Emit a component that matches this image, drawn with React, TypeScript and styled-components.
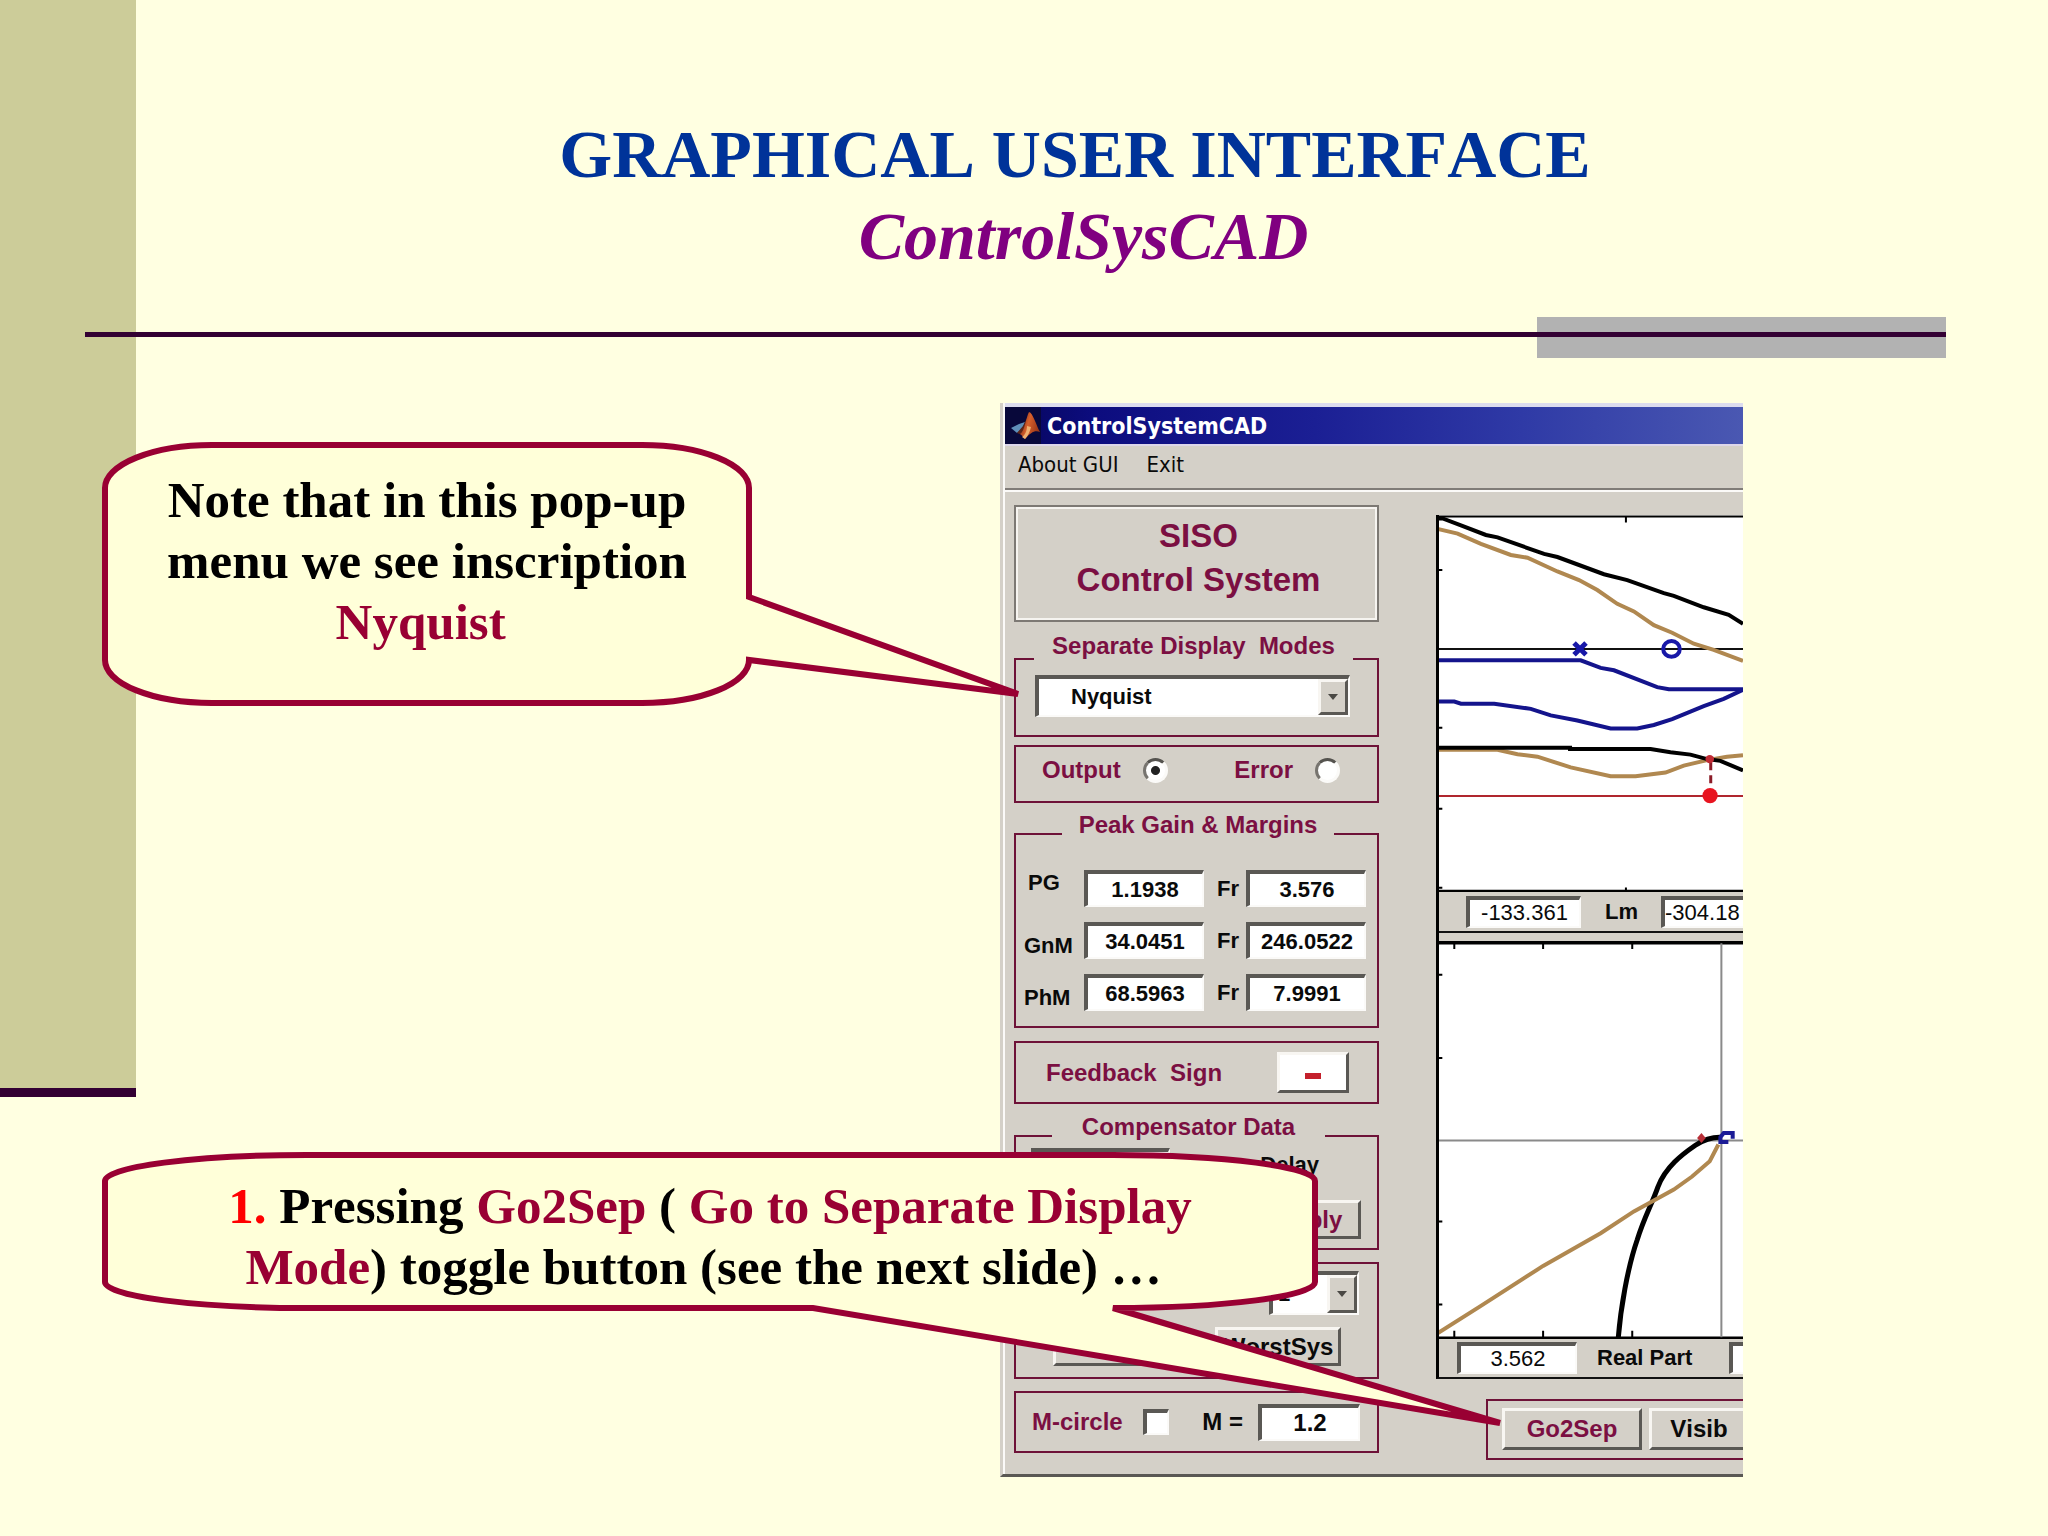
import React from "react";
import styled, { createGlobalStyle, css } from "styled-components";

const color = {
  paper: "#ffffe1",
  note: "#ffffd9",
  olive: "#cccc99",
  plum: "#330033",
  crimson: "#990033",
  face: "#d4d0c8",
  line: "#6e1238",
  label: "#7b0f42",
  shade: "#5a5854",
};

const Global = createGlobalStyle`
  *, *::before, *::after { box-sizing: border-box; }
  body { margin: 0; background: ${color.paper}; }
  button, input, select { font: inherit; color: inherit; margin: 0; border-radius: 0; }
`;

const Slide = styled.main`
  position: relative;
  display: grid;
  grid-template-columns: 136px minmax(0, 1fr);
  min-height: 100vh;
  overflow: hidden;
  background: ${color.paper};
  font-family: "Liberation Serif", "Times New Roman", serif;
  font-kerning: none;
`;

const Band = styled.div`
  height: 1097px;
  background: ${color.olive};
  border-bottom: 9px solid ${color.plum};
`;

const Main = styled.div`
  min-width: 0;
`;

const Heading = styled.h1`
  margin: 0;
  padding: 113px 102px 0 68px;
  text-align: center;
  font-size: 68px;
  line-height: 82px;
  font-weight: 700;
  color: #003399;
`;

const Product = styled.em`
  display: block;
  white-space: pre;
  color: #800080;
`;

const Rule = styled.div`
  position: relative;
  display: grid;
  margin: 40px 102px 0 -51px;
  & > * {
    grid-area: 1 / 1;
  }
`;

const RuleBlock = styled.div`
  justify-self: end;
  width: 22%;
  height: 41px;
  background: #b2b2b2;
`;

const RuleLine = styled.div`
  height: 5px;
  margin-top: 15px;
  background: ${color.plum};
`;

const Stage = styled.div`
  display: grid;
  grid-template-columns: 864fr 743fr 305fr;
  margin-top: 45px;
`;

/* ---------- application window ---------- */

const Window = styled.section`
  grid-column: 2;
  min-width: 0;
  overflow: hidden;
  background: ${color.face};
  border-left: 3px solid ${color.face};
  border-bottom: 3px solid ${color.shade};
  box-shadow: inset 2px 0 0 #fbfaf8;
  padding-left: 2px;
  font-family: "Liberation Sans", Arial, sans-serif;
  font-weight: 700;
  font-size: 22px;
  line-height: 26px;
  color: #0a0a0a;
`;

const TitleBar = styled.header`
  display: flex;
  align-items: center;
  gap: 6px;
  height: 41px;
  border-top: 4px solid #dcdcee;
  background: linear-gradient(90deg, #06065c 0%, #0c0c7e 12%, #1b1f94 42%, #2f3aa6 70%, #4a58b2 100%);
  color: #fff;
  font-family: "DejaVu Sans Condensed", "DejaVu Sans", sans-serif;
  font-size: 23px;
`;

const Menu = styled.nav`
  display: flex;
  align-items: center;
  gap: 28px;
  height: 46px;
  padding: 0 0 5px 13px;
  border-top: 2px solid #dcd6ea;
  border-bottom: 2px solid #807c78;
  box-shadow: 0 2px 0 #fbfaf8;
  font-family: "DejaVu Sans Condensed", "DejaVu Sans", sans-serif;
  font-size: 22px;
  font-weight: 400;
`;

const MenuItem = styled.button`
  border: 0;
  padding: 0;
  background: none;
`;

const Content = styled.div`
  display: grid;
  grid-template-columns: 365px minmax(0, 1fr);
  gap: 57px;
  padding: 15px 0 14px 9px;
`;

const Controls = styled.div`
  display: flex;
  flex-direction: column;
`;

const System = styled.h2`
  height: 117px;
  margin: 0 0 10px;
  padding: 7px 0 0 4px;
  border: 2px solid #7d7974;
  outline: 2px solid #f6f4f0;
  outline-offset: -4px;
  text-align: center;
  font-size: 33px;
  line-height: 44px;
  color: ${color.label};
`;

const Panel = styled.div<{ $h: number; $gap: number }>`
  display: flex;
  align-items: center;
  height: ${(p) => p.$h}px;
  margin-bottom: ${(p) => p.$gap}px;
  border: 2px solid ${color.line};
`;

const GroupHead = styled.div`
  display: flex;
  align-items: flex-end;
`;

const Stub = styled.span<{ $w: number; $drop: number; $end?: boolean }>`
  width: ${(p) => p.$w}px;
  height: ${(p) => p.$drop}px;
  border: 0 solid ${color.line};
  border-top-width: 2px;
  ${(p) => (p.$end ? "border-right-width: 2px;" : "border-left-width: 2px;")}
`;

const GroupTitle = styled.h3`
  flex: 1;
  margin: 0;
  text-align: center;
  white-space: pre;
  font-size: 24px;
  line-height: 28px;
  color: ${color.label};
`;

const GroupBody = styled.div<{ $h: number; $gap: number }>`
  height: ${(p) => p.$h}px;
  margin-bottom: ${(p) => p.$gap}px;
  border: 2px solid ${color.line};
  border-top: 0;
`;

const sunken = css`
  border: 2px solid #fbfaf8;
  border-top: 4px solid ${color.shade};
  border-left: 4px solid ${color.shade};
  background: #fff;
`;

const raised = css`
  border: 3px solid ${color.shade};
  border-top-color: #f8f6f2;
  border-left-color: #f8f6f2;
`;

const Field = styled.input<{ $w: number; $plain?: boolean; $left?: boolean }>`
  ${sunken}
  flex: none;
  width: ${(p) => p.$w}px;
  height: 37px;
  padding: 0;
  text-align: ${(p) => (p.$left ? "left" : "center")};
  font-weight: ${(p) => (p.$plain ? 400 : 700)};
`;

const StripField = styled(Field)`
  height: 32px;
`;

const Picker = styled.span<{ $w: number; $h: number }>`
  ${sunken}
  display: grid;
  grid-template-columns: minmax(0, 1fr) 30px;
  width: ${(p) => p.$w}px;
  height: ${(p) => p.$h}px;
`;

const PickerSelect = styled.select<{ $indent: number }>`
  grid-area: 1 / 1 / 2 / 3;
  appearance: none;
  border: 0;
  padding: 0 0 0 ${(p) => p.$indent}px;
  background: none;
`;

const PickerArrow = styled.span`
  ${raised}
  grid-area: 1 / 2;
  display: grid;
  place-items: center;
  background: ${color.face};
  pointer-events: none;
`;

const ModeRow = styled.div`
  display: flex;
  padding: 15px 0 0 19px;
`;

const Choice = styled.label`
  display: flex;
  align-items: center;
  gap: 22px;
  font-size: 24px;
  color: ${color.label};
`;

const Radio = styled.input`
  appearance: none;
  width: 25px;
  height: 25px;
  border: 3px solid #fbfaf8;
  border-top-color: #55534f;
  border-left-color: #77746f;
  border-radius: 50% !important;
  background: #fff;
  &:checked {
    background: radial-gradient(circle, #222 0 4px, #fff 5px);
  }
`;

const Check = styled.input`
  ${sunken}
  appearance: none;
  width: 26px;
  height: 26px;
`;

const Choices = styled(Panel)`
  padding: 0 37px 8px 26px;
  justify-content: space-between;
`;

const Margins = styled.div`
  display: grid;
  grid-template-columns: 60px 120px 42px 120px;
  row-gap: 15px;
  padding: 31px 0 0 8px;
`;

const MarginLabel = styled.label<{ $at?: "start" | "center" | "end"; $indent?: number }>`
  align-self: ${(p) => p.$at ?? "center"};
  padding-left: ${(p) => p.$indent ?? 0}px;
`;

const SignPanel = styled(Panel)`
  justify-content: space-between;
  padding: 0 28px 0 30px;
`;

const PanelText = styled.span<{ $accent?: boolean }>`
  white-space: pre;
  font-size: 24px;
  color: ${(p) => (p.$accent ? color.label : "inherit")};
`;

const SignButton = styled.button`
  ${raised}
  display: grid;
  place-items: center;
  width: 72px;
  height: 41px;
  padding: 6px 0 0;
  background: #fff;
`;

const Minus = styled.span`
  width: 16px;
  height: 6px;
  background: #c4202c;
`;

const PushButton = styled.button<{ $w: number; $accent?: boolean }>`
  ${raised}
  flex: none;
  width: ${(p) => p.$w}px;
  height: 39px;
  padding: 0;
  background: ${color.face};
  font-size: 24px;
  line-height: 28px;
  color: ${(p) => (p.$accent ? color.label : "inherit")};
`;

const Compensator = styled(GroupBody)`
  display: flex;
  justify-content: space-between;
  padding: 7px 16px 0 15px;
`;

const ListBox = styled.div`
  ${sunken}
  width: 139px;
  height: 92px;
`;

const DelayColumn = styled.div`
  display: flex;
  flex-direction: column;
  align-items: flex-end;
  gap: 22px;
  padding-top: 4px;
`;

const DelayText = styled.span`
  padding-right: 42px;
`;

const Worst = styled(Panel)`
  flex-direction: column;
  align-items: flex-end;
  gap: 12px;
  padding: 7px 18px 0 37px;
`;

const ButtonPair = styled.div`
  display: flex;
  justify-content: space-between;
  width: 100%;
  padding-right: 18px;
`;

const CirclePanel = styled(Panel)`
  justify-content: space-between;
  padding: 0 17px 0 16px;
`;

const CircleChoice = styled(Choice)`
  gap: 20px;
`;

const CircleField = styled.label`
  display: flex;
  align-items: center;
  gap: 15px;
  font-size: 24px;
`;

/* ---------- plots ---------- */

const Plots = styled.div`
  min-width: 0;
  padding-top: 10px;
`;

const PlotFrame = styled.div`
  overflow: hidden;
  border-left: 3px solid #000;
  border-bottom: 2px solid #111;
`;

const Chart = styled.svg<{ $h: number }>`
  display: block;
  width: 100%;
  height: ${(p) => p.$h}px;
  background: #fff;
  & * {
    vector-effect: non-scaling-stroke;
  }
`;

const Strip = styled.div<{ $pad: number; $h: number; $split?: boolean }>`
  display: flex;
  align-items: center;
  height: ${(p) => p.$h}px;
  padding-left: ${(p) => p.$pad}px;
  white-space: nowrap;
  ${(p) => p.$split && "border-bottom: 2px solid #111; margin-bottom: 8px;"}
`;

const AxisName = styled.label<{ $w: number; $indent: number }>`
  flex: none;
  width: ${(p) => p.$w}px;
  padding-left: ${(p) => p.$indent}px;
`;

const Actions = styled.div`
  display: flex;
  gap: 7px;
  height: 61px;
  margin: 20px 0 0 50px;
  padding: 7px 0 0 14px;
  border: 2px solid ${color.line};
  border-right: 0;
  overflow: hidden;
`;

const ActionButton = styled(PushButton)`
  height: 42px;
`;

/* ---------- speech balloons ---------- */

const Balloon = styled.aside<{ $top: number; $w: number; $h: number; $pad: number }>`
  position: absolute;
  left: 102px;
  top: ${(p) => p.$top}px;
  width: ${(p) => p.$w}px;
  height: ${(p) => p.$h}px;
  padding-top: ${(p) => p.$pad}px;
  text-align: center;
  font-size: 51px;
  line-height: 61px;
  font-weight: 700;
  color: #000;
`;

const BalloonShape = styled.svg`
  position: absolute;
  left: 0;
  top: 0;
  overflow: visible;
  fill: ${color.note};
  stroke: ${color.crimson};
  stroke-width: 6;
`;

const BalloonLine = styled.span`
  position: relative;
  display: block;
  white-space: pre;
`;

const Key = styled.span<{ $red?: boolean }>`
  color: ${(p) => (p.$red ? "#ff0000" : color.crimson)};
`;

function MatlabIcon() {
  return (
    <svg width="36" height="37" viewBox="0 0 36 37" aria-hidden="true">
      <defs>
        <linearGradient id="membrane" x1="0" x2="1" y1="0" y2="0.4">
          <stop offset="0" stopColor="#5c1a10" />
          <stop offset="0.5" stopColor="#d8602c" />
          <stop offset="1" stopColor="#9c3818" />
        </linearGradient>
      </defs>
      <rect width="36" height="37" fill="#08083a" />
      <path d="M6 21 L14 17 L20 15 L17 22 L12 26 Z" fill="#5f8fb8" />
      <path d="M12 26 L18 19 L24 7 L21 24 L17 28 Z" fill="#5c2418" />
      <path d="M24 5 C28 6 31 18 35 25 C30 23 26 25 20 32 C18 30 17 28 15 27 C20 24 21 10 24 5 Z" fill="url(#membrane)" />
      <path d="M22 19 C22 24 20 28 17 30 L20 32 C23 29 25 24 26 20 Z" fill="#f0b070" />
    </svg>
  );
}

function Arrow() {
  return (
    <PickerArrow>
      <svg width="10" height="6" viewBox="0 0 10 6" aria-hidden="true">
        <path d="M0 0 H10 L5 6 Z" fill="#4a4844" />
      </svg>
    </PickerArrow>
  );
}

function BodePlot() {
  return (
    <Chart $h={377} viewBox="204 348 914 1095" preserveAspectRatio="none" role="img" fill="none">
      <path d="M198 352 H1118 M766 350 V370 M766 1430 V1443 M198 508 H214 M198 966 H214 M198 1201 H214 M198 1431 H214" stroke="#000" strokeWidth="2" />
      <path d="M198 1441 H1118" stroke="#000" strokeWidth="3" />
      <path d="M198 737 H1118" stroke="#111" strokeWidth="2" />
      <path d="M198 1164 H1118" stroke="#b0262e" strokeWidth="2" />
      <path d="M198 388 L260 402 L330 432 L420 464 L470 472 L560 512 L625 537 L680 566 L740 606 L790 628 L850 668 L905 690 L970 722 L1030 740 L1118 772" stroke="#b08850" strokeWidth="4" />
      <path d="M198 358 L215 358 L270 378 L345 406 L380 413 L520 461 L560 470 L700 520 L770 537 L880 575 L910 583 L1000 616 L1075 638 L1118 664" stroke="#000" strokeWidth="4" />
      <path d="M198 770 H630 L690 792 L730 799 L860 848 L895 854 H1118" stroke="#14148c" strokeWidth="4" />
      <path d="M198 890 H250 L270 896 H370 L480 911 L540 930 L620 945 L720 968 H800 L850 958 L905 941 L1000 903 L1060 882 L1118 856" stroke="#14148c" strokeWidth="4" />
      <path d="M198 1030 H380 L440 1043 L500 1050 L600 1081 L720 1107 H795 L885 1096 L940 1076 L1010 1060 L1070 1050 L1118 1046" stroke="#b08850" strokeWidth="4" />
      <path d="M198 1024 H598 V1028 H840 L900 1037 L960 1044 L1010 1057 L1050 1062 L1118 1090" stroke="#000" strokeWidth="4" />
      <path d="M610 720 L646 754 M646 720 L610 754" stroke="#1818a8" strokeWidth="5" />
      <ellipse cx="903" cy="737" rx="25" ry="23" stroke="#1818a8" strokeWidth="4" />
      <path d="M1021 1066 V1142" stroke="#8c1c28" strokeWidth="3" strokeDasharray="8 5" />
      <ellipse cx="1018" cy="1057" rx="13" ry="12" fill="#c02a34" />
      <ellipse cx="1019" cy="1163" rx="23" ry="22" fill="#e81420" />
    </Chart>
  );
}

function NyquistPlot() {
  return (
    <Chart $h={398} viewBox="204 58 914 1095" preserveAspectRatio="none" role="img" fill="none">
      <path d="M198 62 H1118" stroke="#000" strokeWidth="4" />
      <path d="M198 1150 H1118" stroke="#000" strokeWidth="3" />
      <path d="M250 64 V80 M517 64 V80 M785 64 V80 M250 1130 V1150 M517 1130 V1150 M785 1130 V1150 M198 151 H214 M198 380 H214 M198 830 H214 M198 1058 H214" stroke="#000" strokeWidth="2" />
      <path d="M198 607 H1118 M1053 64 V1148" stroke="#8a8a8a" strokeWidth="2" />
      <path d="M743 1150 C750 1070 770 960 800 880 C820 820 845 780 862 735 C885 680 935 645 975 620 C1000 605 1025 597 1052 598" stroke="#000" strokeWidth="5" />
      <path d="M198 1138 L330 1062 L517 952 L690 862 L790 802 L850 772 L910 742 L965 706 L1018 664 L1044 618" stroke="#b08850" strokeWidth="4" />
      <path d="M980 600 L993 586 L1006 600 L993 614 Z" fill="#b83038" />
      <path d="M1087 602 V586 H1060 L1050 598 V611 H1074" stroke="#1c1c96" strokeWidth="4" />
    </Chart>
  );
}

const marginRows = [
  { id: "pg", name: "PG", at: "start" as const, indent: 4, gain: "1.1938", freq: "3.576" },
  { id: "gnm", name: "GnM", at: "end" as const, indent: 0, gain: "34.0451", freq: "246.0522" },
  { id: "phm", name: "PhM", at: "end" as const, indent: 0, gain: "68.5963", freq: "7.9991" },
];

function ControlColumn() {
  return (
    <Controls>
      <System>
        SISO
        <br />
        Control System
      </System>

      <GroupHead>
        <Stub $w={20} $drop={2} />
        <GroupTitle id="modes">{"Separate Display  Modes"}</GroupTitle>
        <Stub $w={26} $drop={2} $end />
      </GroupHead>
      <GroupBody $h={77} $gap={8}>
        <ModeRow>
          <Picker $w={315} $h={42}>
            <PickerSelect $indent={32} aria-labelledby="modes" defaultValue="Nyquist">
              <option>Nyquist</option>
            </PickerSelect>
            <Arrow />
          </Picker>
        </ModeRow>
      </GroupBody>

      <Choices $h={58} $gap={8}>
        <Choice>
          Output
          <Radio type="radio" name="signal" defaultChecked />
        </Choice>
        <Choice>
          Error
          <Radio type="radio" name="signal" />
        </Choice>
      </Choices>

      <GroupHead>
        <Stub $w={48} $drop={6} />
        <GroupTitle>Peak Gain &amp; Margins</GroupTitle>
        <Stub $w={45} $drop={6} $end />
      </GroupHead>
      <GroupBody $h={189} $gap={13}>
        <Margins>
          {marginRows.map((row) => (
            <React.Fragment key={row.id}>
              <MarginLabel htmlFor={row.id} $at={row.at} $indent={row.indent}>
                {row.name}
              </MarginLabel>
              <Field id={row.id} $w={120} defaultValue={row.gain} />
              <MarginLabel htmlFor={`${row.id}-fr`} $indent={13}>
                Fr
              </MarginLabel>
              <Field id={`${row.id}-fr`} $w={120} defaultValue={row.freq} />
            </React.Fragment>
          ))}
        </Margins>
      </GroupBody>

      <SignPanel $h={63} $gap={9}>
        <PanelText $accent id="sign">
          {"Feedback  Sign"}
        </PanelText>
        <SignButton type="button" aria-labelledby="sign">
          <Minus />
        </SignButton>
      </SignPanel>

      <GroupHead>
        <Stub $w={38} $drop={6} />
        <GroupTitle>Compensator Data</GroupTitle>
        <Stub $w={54} $drop={6} $end />
      </GroupHead>
      <Compensator $h={109} $gap={12}>
        <ListBox />
        <DelayColumn>
          <DelayText>Delay</DelayText>
          <PushButton type="button" $w={104} $accent>
            Apply
          </PushButton>
        </DelayColumn>
      </Compensator>

      <Worst $h={117} $gap={12}>
        <Picker $w={90} $h={44}>
          <PickerSelect $indent={5} aria-labelledby="worst" defaultValue="1">
            <option>1</option>
          </PickerSelect>
          <Arrow />
        </Picker>
        <ButtonPair>
          <PushButton type="button" $w={120} aria-labelledby="worst" />
          <PushButton type="button" $w={126} id="worst">
            WorstSys
          </PushButton>
        </ButtonPair>
      </Worst>

      <CirclePanel $h={62} $gap={0}>
        <CircleChoice>
          M-circle
          <Check type="checkbox" />
        </CircleChoice>
        <CircleField>
          M =
          <Field $w={102} defaultValue="1.2" />
        </CircleField>
      </CirclePanel>
    </Controls>
  );
}

export default function App() {
  return (
    <Slide>
      <Global />
      <Band />
      <Main>
        <Heading>
          GRAPHICAL USER INTERFACE
          <Product>{" ControlSysCAD"}</Product>
        </Heading>
        <Rule>
          <RuleBlock />
          <RuleLine />
        </Rule>
        <Stage>
          <Window>
            <TitleBar>
              <MatlabIcon />
              ControlSystemCAD
            </TitleBar>
            <Menu>
              <MenuItem type="button">About GUI</MenuItem>
              <MenuItem type="button">Exit</MenuItem>
            </Menu>
            <Content>
              <ControlColumn />
              <Plots>
                <PlotFrame>
                  <BodePlot />
                  <Strip $pad={27} $h={41} $split>
                    <StripField id="lm-x" $w={115} $plain defaultValue="-133.361" />
                    <AxisName htmlFor="lm" $w={80} $indent={24}>
                      Lm
                    </AxisName>
                    <StripField id="lm" $w={120} $plain $left defaultValue="-304.18" />
                  </Strip>
                  <NyquistPlot />
                  <Strip $pad={18} $h={38}>
                    <StripField id="real" $w={120} $plain defaultValue="3.562" />
                    <AxisName htmlFor="real" $w={152} $indent={20}>
                      Real Part
                    </AxisName>
                    <StripField $w={120} $plain aria-label="Real Part" />
                  </Strip>
                </PlotFrame>
                <Actions>
                  <ActionButton type="button" $w={140} $accent>
                    Go2Sep
                  </ActionButton>
                  <ActionButton type="button" $w={100}>
                    Visib
                  </ActionButton>
                </Actions>
              </Plots>
            </Content>
          </Window>
        </Stage>
      </Main>

      <Balloon $top={442} $w={650} $h={264} $pad={28}>
        <BalloonShape width="650" height="264" aria-hidden="true">
          <path d="M110 3 H540 A107 43 0 0 1 647 46 V155 L916 252 L647 218 A107 43 0 0 1 540 261 H110 A107 43 0 0 1 3 218 V46 A107 43 0 0 1 110 3 Z" />
        </BalloonShape>
        <BalloonLine>Note that in this pop-up</BalloonLine>
        <BalloonLine>menu we see inscription</BalloonLine>
        <BalloonLine>
          <Key>{"Nyquist "}</Key>
        </BalloonLine>
      </Balloon>

      <Balloon $top={1152} $w={1216} $h={159} $pad={24}>
        <BalloonShape width="1216" height="159" aria-hidden="true">
          <path d="M205 3 H1011 A202 26 0 0 1 1213 29 V130 A202 26 0 0 1 1011 156 L1398 271 L711 156 H205 A202 26 0 0 1 3 130 V29 A202 26 0 0 1 205 3 Z" />
        </BalloonShape>
        <BalloonLine>
          <Key $red>1.</Key> Pressing <Key>Go2Sep</Key> ( <Key>Go to Separate Display</Key>
        </BalloonLine>
        <BalloonLine>
          <Key>Mode</Key>
          {") toggle button (see the next slide) … "}
        </BalloonLine>
      </Balloon>
    </Slide>
  );
}
